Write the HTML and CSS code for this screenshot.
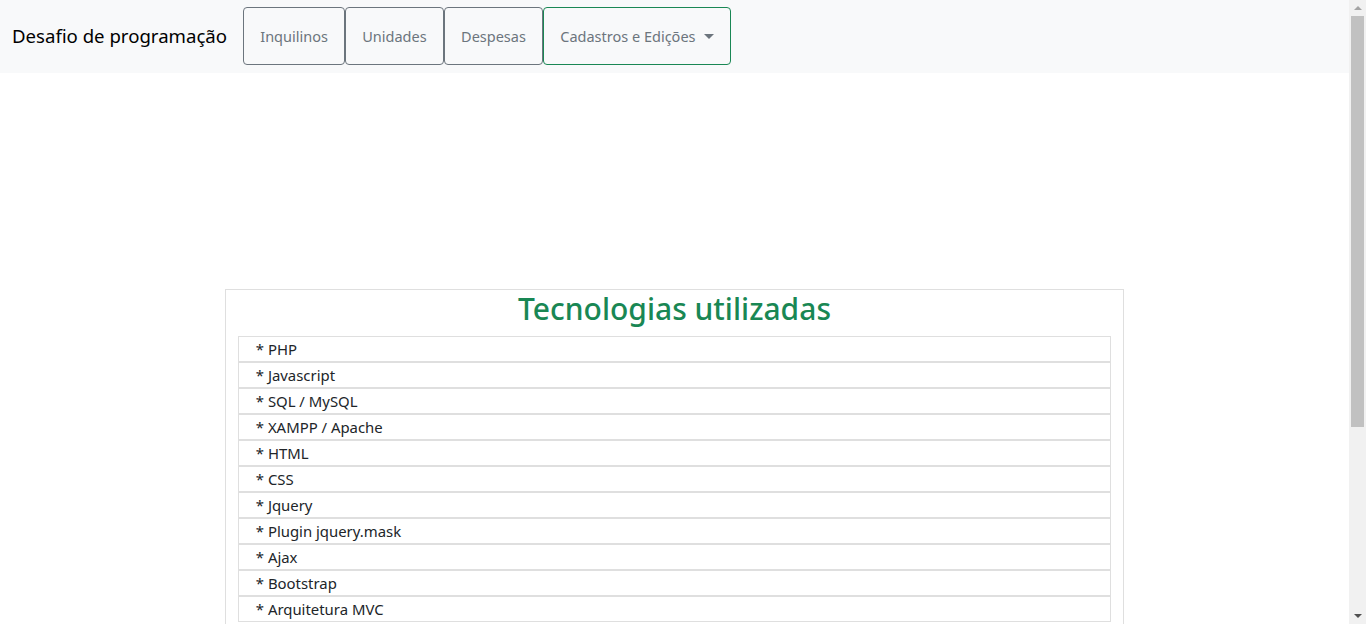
FILE: index.html
```html
<!DOCTYPE html>
<html lang="pt-BR">
<head>
<meta charset="utf-8">
<title>Desafio de programação</title>
<link rel="stylesheet" href="styles.css">
</head>
<body>
<nav class="navbar">
  <a class="brand" href="#">Desafio de programação</a>
  <div class="nav-buttons">
    <button class="btn">Inquilinos</button>
    <button class="btn">Unidades</button>
    <button class="btn">Despesas</button>
    <button class="btn btn-success dropdown">Cadastros e Edições<span class="caret"></span></button>
  </div>
</nav>
<main class="main">
  <section class="card">
    <h2 class="card-title">Tecnologias utilizadas</h2>
    <ul class="list">
      <li class="list-item">* PHP</li>
      <li class="list-item">* Javascript</li>
      <li class="list-item">* SQL / MySQL</li>
      <li class="list-item">* XAMPP / Apache</li>
      <li class="list-item">* HTML</li>
      <li class="list-item">* CSS</li>
      <li class="list-item">* Jquery</li>
      <li class="list-item">* Plugin jquery.mask</li>
      <li class="list-item">* Ajax</li>
      <li class="list-item">* Bootstrap</li>
      <li class="list-item">* Arquitetura MVC</li>
    </ul>
  </section>
</main>
<aside class="scrollbar" aria-hidden="true">
  <div class="sb-arrow sb-up"></div>
  <div class="sb-track"><div class="sb-thumb"></div></div>
  <div class="sb-arrow sb-down"></div>
</aside>
</body>
</html>
```
FILE: styles.css
```css
html, body {
  margin: 0;
  padding: 0;
}
body {
  font-family: "Noto Sans", "Open Sans", sans-serif;
  color: #212529;
  background: #fff;
  font-size: 16px;
  line-height: 1.5;
  padding-right: 17px;
}
.navbar {
  display: flex;
  align-items: center;
  background: #f8f9fa;
  padding: 7px 12px 8px;
}
.brand {
  font-size: 18.6px;
  color: #000;
  text-decoration: none;
  margin-right: 16px;
  white-space: nowrap;
}
.nav-buttons {
  display: flex;
}
.btn {
  font-family: inherit;
  font-size: 14.5px;
  line-height: 24px;
  color: #6c757d;
  background: transparent;
  border: 1px solid #6c757d;
  border-radius: 4px;
  padding: 16px 16.2px;
  cursor: pointer;
  display: flex;
  align-items: center;
}
.btn-success {
  border-color: #198754;
}
.caret {
  display: inline-block;
  margin-left: 8px;
  border-top: 5px solid #6c757d;
  border-left: 5px solid transparent;
  border-right: 5px solid transparent;
}
.main {
  margin-top: 216px;
  padding-bottom: 260px;
}
.card {
  width: 66.67%;
  margin: 0 auto;
  box-sizing: border-box;
  border: 1px solid #dfdfdf;
  padding: 0 12px 12px;
}
.card-title {
  margin: 0 0 8px;
  text-align: center;
  color: #198754;
  font-size: 30px;
  font-weight: 500;
  line-height: 38px;
}
.list {
  list-style: none;
  margin: 0;
  padding: 0;
}
.list-item {
  border: 1px solid #dfdfdf;
  padding: 0 17px;
  line-height: 24px;
  font-size: 14.9px;
}

/* window scrollbar */
.scrollbar {
  position: fixed;
  top: 0;
  right: 0;
  bottom: 0;
  width: 17px;
  background: #f1f1f1;
  display: flex;
  flex-direction: column;
}
.sb-arrow {
  height: 16px;
  display: flex;
  align-items: center;
  justify-content: center;
}
.sb-up::before,
.sb-down::before {
  content: "";
  border-left: 4px solid transparent;
  border-right: 4px solid transparent;
}
.sb-up::before {
  border-bottom: 4px solid #a3a3a3;
}
.sb-down::before {
  border-top: 4px solid #505050;
}
.sb-track {
  flex: 1;
  padding: 0 2px;
}
.sb-thumb {
  height: 411px;
  background: #c1c1c1;
}
```
